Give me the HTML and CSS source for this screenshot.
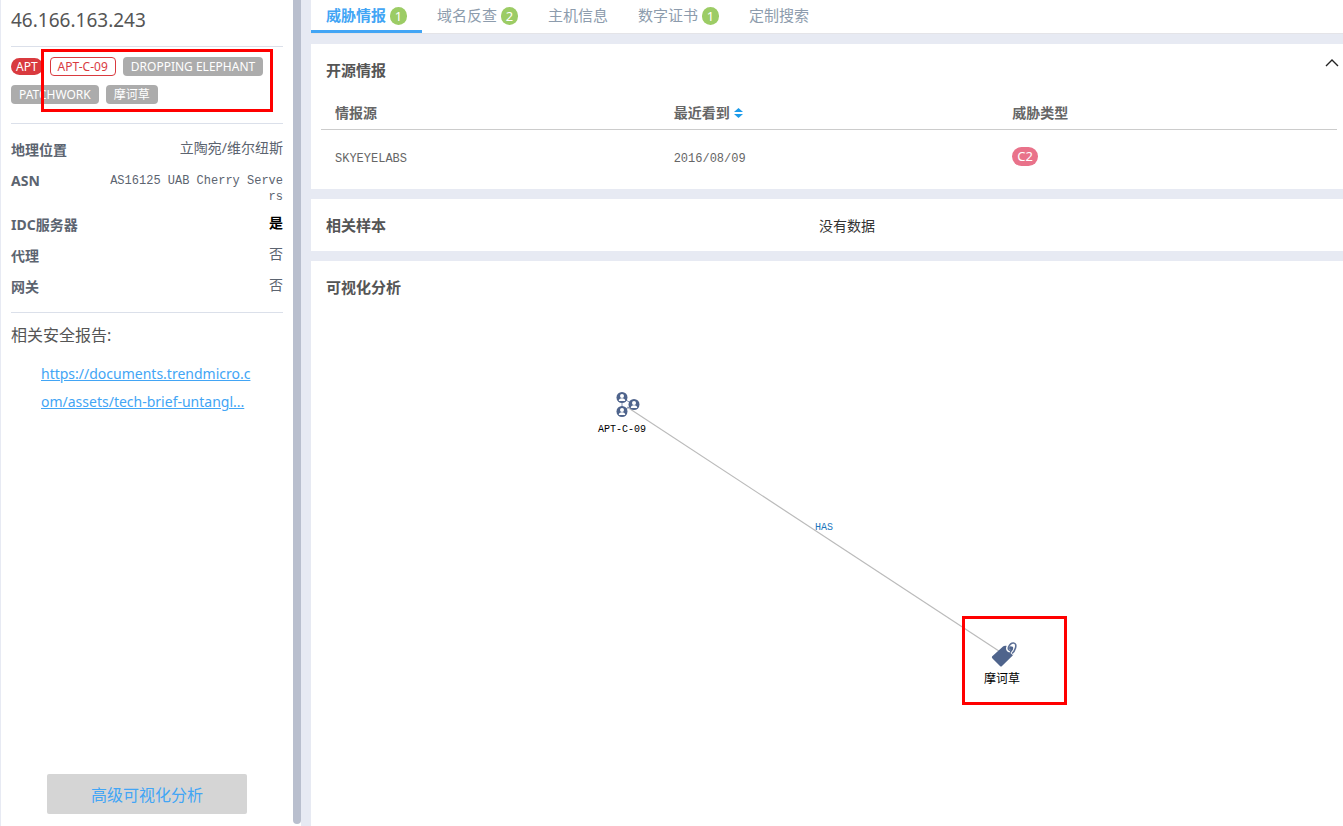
FILE: index.html
```
<!DOCTYPE html>
<html lang="zh-CN">
<head>
    <meta charset="UTF-8">
    <meta name="viewport" content="width=device-width, initial-scale=1.0">
    <title>46.166.163.243 - 威胁情报</title>
    <link rel="stylesheet" href="styles.css">
</head>
<body>
    <aside class="sidebar">
        <div class="sidebar-content">
            <h1 class="ip">46.166.163.243</h1>

            <div class="tags">
                <span class="tag-apt">APT</span>
                <span class="tag tag-outline">APT-C-09</span>
                <span class="tag">DROPPING ELEPHANT</span>
                <span class="tag">PATCHWORK</span>
                <span class="tag">摩诃草</span>
                <div class="tags-mark"></div>
            </div>

            <dl class="info">
                <div class="info-row"><dt>地理位置</dt><dd>立陶宛/维尔纽斯</dd></div>
                <div class="info-row"><dt>ASN</dt><dd class="mono">AS16125 UAB Cherry Servers</dd></div>
                <div class="info-row"><dt>IDC服务器</dt><dd class="yes">是</dd></div>
                <div class="info-row"><dt>代理</dt><dd>否</dd></div>
                <div class="info-row"><dt>网关</dt><dd>否</dd></div>
            </dl>

            <h2 class="report-title">相关安全报告:</h2>
            <a href="#" class="report-link">https://documents.trendmicro.com/assets/tech-brief-untangl...</a>

            <button type="button" class="visual-button">高级可视化分析</button>
        </div>
        <div class="scrollbar"></div>
    </aside>

    <main class="main">
        <nav class="tabs">
            <a href="#" class="tab active">威胁情报<span class="badge">1</span></a>
            <a href="#" class="tab">域名反查<span class="badge">2</span></a>
            <a href="#" class="tab">主机信息</a>
            <a href="#" class="tab">数字证书<span class="badge">1</span></a>
            <a href="#" class="tab">定制搜索</a>
        </nav>

        <section class="card">
            <div class="card-header">
                <h2>开源情报</h2>
                <button type="button" class="collapse" aria-label="收起">
                    <svg width="14" height="9" viewBox="0 0 14 9"><path d="M1 8L7 2L13 8" fill="none" stroke="#222" stroke-width="1.4"/></svg>
                </button>
            </div>
            <table class="intel">
                <thead>
                    <tr>
                        <th>情报源</th>
                        <th>最近看到<svg class="sort" width="9" height="12" viewBox="0 0 9 12"><path d="M0 5L4.500 1L9 5ZM0 7H9L4.500 11Z" fill="#1c9bea"/></svg></th>
                        <th>威胁类型</th>
                    </tr>
                </thead>
                <tbody>
                    <tr>
                        <td>SKYEYELABS</td>
                        <td>2016/08/09</td>
                        <td><span class="pill">C2</span></td>
                    </tr>
                </tbody>
            </table>
        </section>

        <section class="card samples">
            <h2>相关样本</h2>
            <p>没有数据</p>
        </section>

        <section class="card graph-card">
            <h2>可视化分析</h2>
            <svg class="graph" role="img" aria-label="APT-C-09 HAS 摩诃草">
                <line x1="316" y1="96" x2="694" y2="344" stroke="#bbb" stroke-width="1.2"/>
                <text class="edge-label" x="513" y="219">HAS</text>

                <!-- group node -->
                <g transform="translate(305 81)">
                    <path d="M6 6V19L18 12.500Z" fill="none" stroke="#8492b3" stroke-width="1"/>
                    <g id="person">
                        <circle cx="6" cy="5.500" r="5.500" fill="#4f648c"/>
                        <circle cx="6" cy="4" r="2" fill="#fff"/>
                        <path d="M2.800 9Q2.800 6.200 6 6.200T9.200 9Z" fill="#fff"/>
                    </g>
                    <use href="#person" x="0" y="14"/>
                    <use href="#person" x="12" y="7"/>
                </g>
                <text class="node-label" x="311" y="121">APT-C-09</text>

                <!-- tag node -->
                <g transform="translate(681 331)">
                    <path d="M0 14.500L11 4.500Q12 3.600 13.500 3.700L20 4.500Q21.300 4.700 21.300 6V11.500Q21.300 13 20.200 14L10 24Q9 25 8 24L0.500 16.500Q-0.500 15.300 0 14.500Z" fill="#4f648c"/>
                    <path d="M18 9Q15.500 8.500 15.500 6Q16.500 1 21 0.800Q24.500 1.300 23.500 5.500Q22.500 9 19.500 12" fill="none" stroke="#fff" stroke-width="3"/>
                    <path d="M18.500 8.500Q15.500 8 16.500 5Q18.500 0.800 21.500 1Q24.800 1.500 23.500 6Q22.500 9.500 20 11.500" fill="none" stroke="#5d7096" stroke-width="1.600"/>
                </g>
                <text class="node-label node-label-cn" x="691" y="372">摩诃草</text>
                <rect x="652.500" y="306.500" width="102" height="86" fill="none" stroke="#f00" stroke-width="3"/>
            </svg>
        </section>
    </main>
</body>
</html>
```
FILE: styles.css
```
* {
    box-sizing: border-box;
}
body {
    margin: 0;
    height: 100vh;
    display: flex;
    overflow: hidden;
    background-color: #e7eaf3;
    color: #555;
    font-family: "Noto Sans", "Noto Sans CJK SC", sans-serif;
    font-size: 14px;
}
h1, h2, p, dl, dd {
    margin: 0;
}
button {
    font-family: inherit;
    border: none;
    cursor: pointer;
}

/* sidebar */
.sidebar {
    flex: none;
    width: 301px;
    margin-right: 10px;
    border-left: 1px solid #e7eaf3;
    background-color: #fff;
    display: flex;
}
.sidebar-content {
    flex: 1;
    padding: 0 10px 12px;
    display: flex;
    flex-direction: column;
}
.scrollbar {
    width: 8px;
    margin-bottom: 2px;
    background-color: #b9bfce;
    border-radius: 0 0 4px 4px;
}
.ip {
    height: 47px;
    line-height: 40px;
    font-size: 19px;
    font-weight: normal;
    border-bottom: 1px solid #dbe0ea;
}
.tags {
    position: relative;
    display: flex;
    flex-wrap: wrap;
    align-items: center;
    gap: 9px 7px;
    padding: 10px 0 19px;
    border-bottom: 1px solid #dbe0ea;
    font-size: 12px;
    color: #fff;
}
.tag {
    height: 19px;
    line-height: 19px;
    padding: 0 8px;
    border-radius: 4px;
    background-color: #acacac;
}
.tag-outline {
    line-height: 17px;
    padding: 0 7px;
    border: 1px solid #d93a3f;
    background-color: #fff;
    color: #d93a3f;
}
.tag-apt {
    height: 17px;
    line-height: 17px;
    padding: 0 5px;
    border-radius: 9px;
    background-color: #d93a3f;
}
.tags-mark {
    position: absolute;
    left: 30px;
    top: 2px;
    width: 232px;
    height: 63px;
    border: 3px solid #f00;
}
.info {
    padding: 14px 0 6px;
    border-bottom: 1px solid #dbe0ea;
    color: #5c6470;
}
.info-row {
    display: flex;
    justify-content: space-between;
    margin-bottom: 7px;
    line-height: 24px;
}
.info-row dt {
    flex: none;
    font-weight: bold;
}
.info-row dd {
    line-height: 20px;
    text-align: right;
}
.info-row .mono {
    width: 175px;
    padding: 4px 0 1px;
    font-family: "Liberation Mono", monospace;
    font-size: 12px;
    line-height: 16px;
    word-break: break-all;
}
.info-row .yes {
    font-weight: bold;
    color: #000;
}
.report-title {
    margin-top: 10px;
    line-height: 24px;
    font-size: 16px;
    font-weight: normal;
}
.report-link {
    margin: 13px 30px 0;
    line-height: 28px;
    color: #42a5f5;
    word-break: break-all;
}
.visual-button {
    width: 200px;
    height: 40px;
    margin: auto auto 0;
    border-radius: 2px;
    background-color: #d5d5d5;
    color: #42a5f5;
    font-size: 16px;
}

/* main */
.main {
    flex: 1;
    min-width: 0;
    display: flex;
    flex-direction: column;
    gap: 10px;
}
.tabs {
    display: flex;
    height: 34px;
    background-color: #fff;
    border-bottom: 1px solid #e4e4e8;
}
.tab {
    display: flex;
    align-items: center;
    gap: 4px;
    padding: 0 15px 2px;
    border-bottom: 3px solid transparent;
    color: #8d9cad;
    font-size: 15px;
    text-decoration: none;
}
.tab.active {
    border-bottom-color: #42a5f5;
    color: #42a5f5;
    font-weight: bold;
}
.badge {
    width: 17px;
    height: 18px;
    margin-top: 4px;
    line-height: 18px;
    border-radius: 9px;
    background-color: #9ccc65;
    color: #fff;
    font-size: 13px;
    font-weight: normal;
    text-align: center;
}
.card {
    background-color: #fff;
}
.card h2 {
    padding-left: 15px;
    line-height: 24px;
    font-size: 15px;
}
.card-header {
    display: flex;
    justify-content: space-between;
    align-items: flex-start;
    padding: 14px 4px 0 0;
}
.collapse {
    display: flex;
    padding: 0;
    background: none;
}
.intel {
    width: calc(100% - 16px);
    margin: 14px 6px 0 10px;
    table-layout: fixed;
    border-collapse: collapse;
}
.intel th {
    height: 33px;
    padding: 0 14px;
    border-bottom: 1px solid #ccc;
    color: #666;
    text-align: left;
}
.intel td {
    height: 60px;
    padding: 0 14px;
    font-family: "Liberation Mono", monospace;
    font-size: 12px;
    color: #666;
}
.sort {
    margin-left: 4px;
    vertical-align: -1px;
}
.pill {
    display: inline-block;
    height: 19px;
    line-height: 19px;
    margin-bottom: 6px;
    padding: 0 5px;
    border-radius: 10px;
    background-color: #e9728a;
    color: #fff;
    font-family: "Noto Sans", sans-serif;
    font-size: 13px;
}
.samples {
    display: grid;
    grid-template-columns: 1fr auto 1fr;
    align-items: center;
    height: 52px;
}
.samples p {
    padding-left: 40px;
    color: #333;
}
.graph-card {
    flex: 1;
    min-height: 0;
    display: flex;
    flex-direction: column;
    padding-top: 14px;
}
.graph {
    flex: 1;
    width: 100%;
    min-height: 0;
    margin-top: 12px;
}
.graph text {
    font-family: "Liberation Mono", "Noto Sans CJK SC", monospace;
    font-size: 10px;
    text-anchor: middle;
}
.graph .edge-label {
    fill: #1b75bc;
}
.graph .node-label {
    fill: #000;
}
.graph .node-label-cn {
    font-size: 12px;
}
```
